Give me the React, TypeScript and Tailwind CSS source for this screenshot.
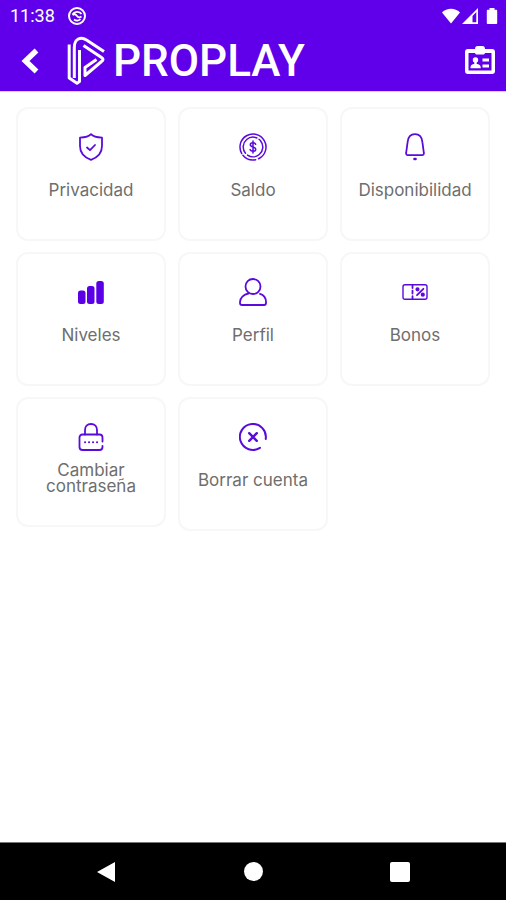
import type { ReactNode } from 'react'

type Item = {
  label: string
  icon: ReactNode
  twoLines?: boolean
}

const line = {
  fill: 'none',
  stroke: 'currentColor',
  strokeWidth: 1.8,
  strokeLinecap: 'round' as const,
  strokeLinejoin: 'round' as const,
}

function Icon({ children }: { children: ReactNode }) {
  return (
    <svg viewBox="0 0 28 28" className="h-7 w-7 text-[#5a0bdc]" aria-hidden="true" {...line}>
      {children}
    </svg>
  )
}

const items: Item[] = [
  {
    label: 'Privacidad',
    icon: (
      <Icon>
        <path d="M14 1.200C11.500 4 7.500 4.500 3 4.700V13c0 7 4.500 11.500 11 13.800C20.500 24.500 25 20 25 13V4.700C20.500 4.500 16.500 4 14 1.200Z" />
        <path d="m10 14.500 3 2.700 5-5.200" />
      </Icon>
    ),
  },
  {
    label: 'Saldo',
    icon: (
      <Icon>
        <circle cx="14" cy="14" r="13" strokeWidth="1.500" strokeDasharray="62 3 14 3" transform="rotate(150 14 14)" />
        <circle cx="14" cy="14" r="9.800" strokeWidth="1.500" strokeDasharray="26 2.500 30 3" transform="rotate(140 14 14)" />
        <path strokeWidth="1.500" d="M16.700 11.300c-.5-1-1.400-1.500-2.700-1.500-1.600 0-2.700.8-2.700 2 0 2.900 5.500 1.500 5.500 4.400 0 1.300-1.100 2.100-2.800 2.100-1.400 0-2.400-.6-2.900-1.700M14 8v12" />
      </Icon>
    ),
  },
  {
    label: 'Disponibilidad',
    icon: (
      <Icon>
        <path d="M14 1.200c-4.700 0-7 3.500-7.400 8L5.200 19.500c-.3 1.700.3 2.600 1.800 2.600h14c1.500 0 2.100-.9 1.800-2.600L21.400 9.200C21 4.700 18.700 1.200 14 1.200Z" />
        <path d="M13.500 26h1" strokeWidth="2.600" />
      </Icon>
    ),
  },
  {
    label: 'Niveles',
    icon: (
      <Icon>
        <g fill="#5b00e6" stroke="none">
          <rect x="1" y="12.500" width="7.500" height="13.500" rx="2.500" />
          <rect x="10" y="8" width="7.500" height="18" rx="2.500" />
          <rect x="19.300" y="3" width="7.500" height="23" rx="2.500" />
        </g>
      </Icon>
    ),
  },
  {
    label: 'Perfil',
    icon: (
      <Icon>
        <circle cx="14" cy="8.500" r="7.500" />
        <path d="M9.500 15.500C4.500 16.500 1 20 1 24v1c0 1.200.8 2 2 2h22c1.200 0 2-.8 2-2v-1c0-3.800-2.300-7-6-8.200" />
      </Icon>
    ),
  },
  {
    label: 'Bonos',
    icon: (
      <Icon>
        <path strokeWidth="1.400" d="M4 6.800h20c1.300 0 2 .7 2 2v10.400c0 1.300-.7 2-2 2H4c-1.300 0-2-.7-2-2V8.800c0-1.300.7-2 2-2Z" />
        <path strokeDasharray="3 2.600" d="M11.500 7v14" />
        <path d="m16 17.200 6.400-6.400" />
        <circle cx="16.500" cy="11.300" r="1.200" fill="currentColor" />
        <circle cx="21.800" cy="16.700" r="1.200" fill="currentColor" />
      </Icon>
    ),
  },
  {
    label: 'Cambiar contraseña',
    twoLines: true,
    icon: (
      <Icon>
        <path d="M8 11.500V7c0-3.500 2.300-6 6-6s6 2.500 6 6v4.500" />
        <path d="M25.500 18.500V14.500c0-1.900-1.100-3-3-3H5.500c-1.900 0-3 1.100-3 3V24c0 1.900 1.100 3 3 3h17c1.900 0 3-1.100 3-3v-1.200" />
        <path strokeWidth="2" d="M8 19.300h.1M12 19.300h.1M16 19.300h.1M20 19.300h.1" />
      </Icon>
    ),
  },
  {
    label: 'Borrar cuenta',
    icon: (
      <Icon>
        <path strokeWidth="2" d="M26.700 16A13 13 0 1 0 21 24.800" />
        <path strokeWidth="2.400" d="m10.200 10.200 7.600 7.600m0-7.600-7.600 7.600" />
      </Icon>
    ),
  },
]

function StatusBar() {
  return (
    <div className="flex h-8 items-center justify-between pr-2 pl-[10px]">
      <div className="flex items-center gap-3">
        <span className="font-[Roboto,sans-serif] text-[18px] leading-5">11:38</span>
        <svg viewBox="0 0 20 20" className="h-5 w-5" fill="none" stroke="currentColor" strokeWidth="2" aria-hidden="true">
          <circle cx="10" cy="10" r="8" />
          <path d="M5.500 8.500C7 5.500 12.500 4.800 14.500 8M5.500 9c2-1.500 3.500-.5 4.500 1s3 1.500 4.500.5M7 13.500c2 1.500 5 1.300 6.500-.5" strokeWidth="1.800" />
        </svg>
      </div>
      <div className="flex items-center gap-[2px]">
        <svg viewBox="0 0 18 16" className="h-4 w-[18px]" fill="currentColor" aria-hidden="true">
          <path d="M0 4.500C5-.5 13-.5 18 4.500L9 15.500Z" />
        </svg>
        <svg viewBox="0 0 16 16" className="h-4 w-4" aria-hidden="true">
          <path fill="currentColor" fillRule="evenodd" d="M16 0v16H0ZM14.300 4v10.300h-3.800V8Z" />
        </svg>
        <svg viewBox="0 0 12 16" className="ml-[6px] h-4 w-3" fill="currentColor" aria-hidden="true">
          <path d="M3.500 0h5v1.800H10c.8 0 1.200.4 1.200 1.200v11.800c0 .8-.4 1.200-1.200 1.200H2c-.8 0-1.200-.4-1.200-1.200V3c0-.8.4-1.200 1.200-1.200h1.500Z" />
        </svg>
      </div>
    </div>
  )
}

function Logo() {
  return (
    <div className="flex items-center gap-2">
      <svg
        viewBox="0 0 38 50"
        className="h-[50px] w-[38px]"
        fill="none"
        stroke="currentColor"
        strokeWidth="3"
        strokeLinejoin="round"
        aria-hidden="true"
      >
        <path d="M2.200 8.500V42L10 47.200l2.500-1.600V14" />
        <path d="M7.300 42V11.500C7.300 2.500 14 .3 19.500 4L37 15.500" />
        <path d="M16.500 9.500 34.500 21.500c2 1.300 2 2.700 0 4L18 39.500V31.500L29.500 23.500" />
      </svg>
      <span className="font-[Roboto,sans-serif] text-[44px] leading-[50px] font-medium">PROPLAY</span>
    </div>
  )
}

function Header() {
  return (
    <header className="bg-[#6000ea] text-white">
      <StatusBar />
      <div className="flex h-[60px] items-center border-b border-[#d9c8f8] pr-[10px] pb-[2px] pl-[21px]">
        <button aria-label="Volver" className="mr-[26px] cursor-pointer">
          <svg viewBox="0 0 20 28" className="h-7 w-5" fill="none" stroke="currentColor" strokeWidth="5.500" aria-hidden="true">
            <path d="M15.500 3.500 4.500 14l11 10.500" />
          </svg>
        </button>
        <Logo />
        <button aria-label="Credencial" className="ml-auto cursor-pointer">
          <svg viewBox="0 0 32 30" className="h-[30px] w-8" fill="currentColor" aria-hidden="true">
            <path fillRule="evenodd" d="M4 3h7c0-2 1-3 2.500-3h5C20 0 21 1 21 3h7c2 0 3 1 3 3v19c0 2-1 3-3 3H4c-2 0-3-1-3-3V6c0-2 1-3 3-3Zm.5 4v17.500h23V7H21c-.4 1-1 1.500-2 1.500h-6c-1 0-1.600-.5-2-1.500Z" />
            <circle cx="11.500" cy="14" r="2.700" />
            <path d="M10.300 15h2.400v3c2.500.2 4 1.300 4 3.200v1H6.500v-1c0-1.900 1.400-3 3.800-3.200Z" />
            <path d="M18.500 12.500H25v3h-6.500zM18.500 18.500H25v3h-6.500z" />
          </svg>
        </button>
      </div>
    </header>
  )
}

function MenuCard({ label, icon, twoLines }: Item) {
  return (
    <button className="flex cursor-pointer flex-col items-center rounded-xl border-2 border-[#f7f7f7] px-2 pt-6 pb-[31px]">
      {icon}
      <span
        className={
          twoLines
            ? 'mt-[11px] w-24 text-center text-[17px] leading-4'
            : 'mt-[11px] text-[17px] leading-9 whitespace-nowrap'
        }
      >
        {label}
      </span>
    </button>
  )
}

export default function App() {
  return (
    <div className="flex min-h-screen flex-col bg-white font-[Inter,sans-serif] text-[#6e6e6e]">
      <Header />
      <main className="grid flex-1 grid-cols-3 content-start items-start gap-x-3 gap-y-[11px] px-4 pt-[15px]">
        {items.map((item) => (
          <MenuCard key={item.label} {...item} />
        ))}
      </main>
      <nav className="flex h-[58px] items-center justify-between border-t border-[#777777] bg-black px-24 text-white">
        <button aria-label="Atrás" className="cursor-pointer">
          <svg viewBox="0 0 20 22" className="h-[22px] w-5" fill="currentColor" aria-hidden="true">
            <path d="M19 1v20L1 11Z" />
          </svg>
        </button>
        <button aria-label="Inicio" className="h-[19px] w-[19px] cursor-pointer rounded-full bg-white" />
        <button aria-label="Recientes" className="h-5 w-5 cursor-pointer rounded-xs bg-white" />
      </nav>
    </div>
  )
}
